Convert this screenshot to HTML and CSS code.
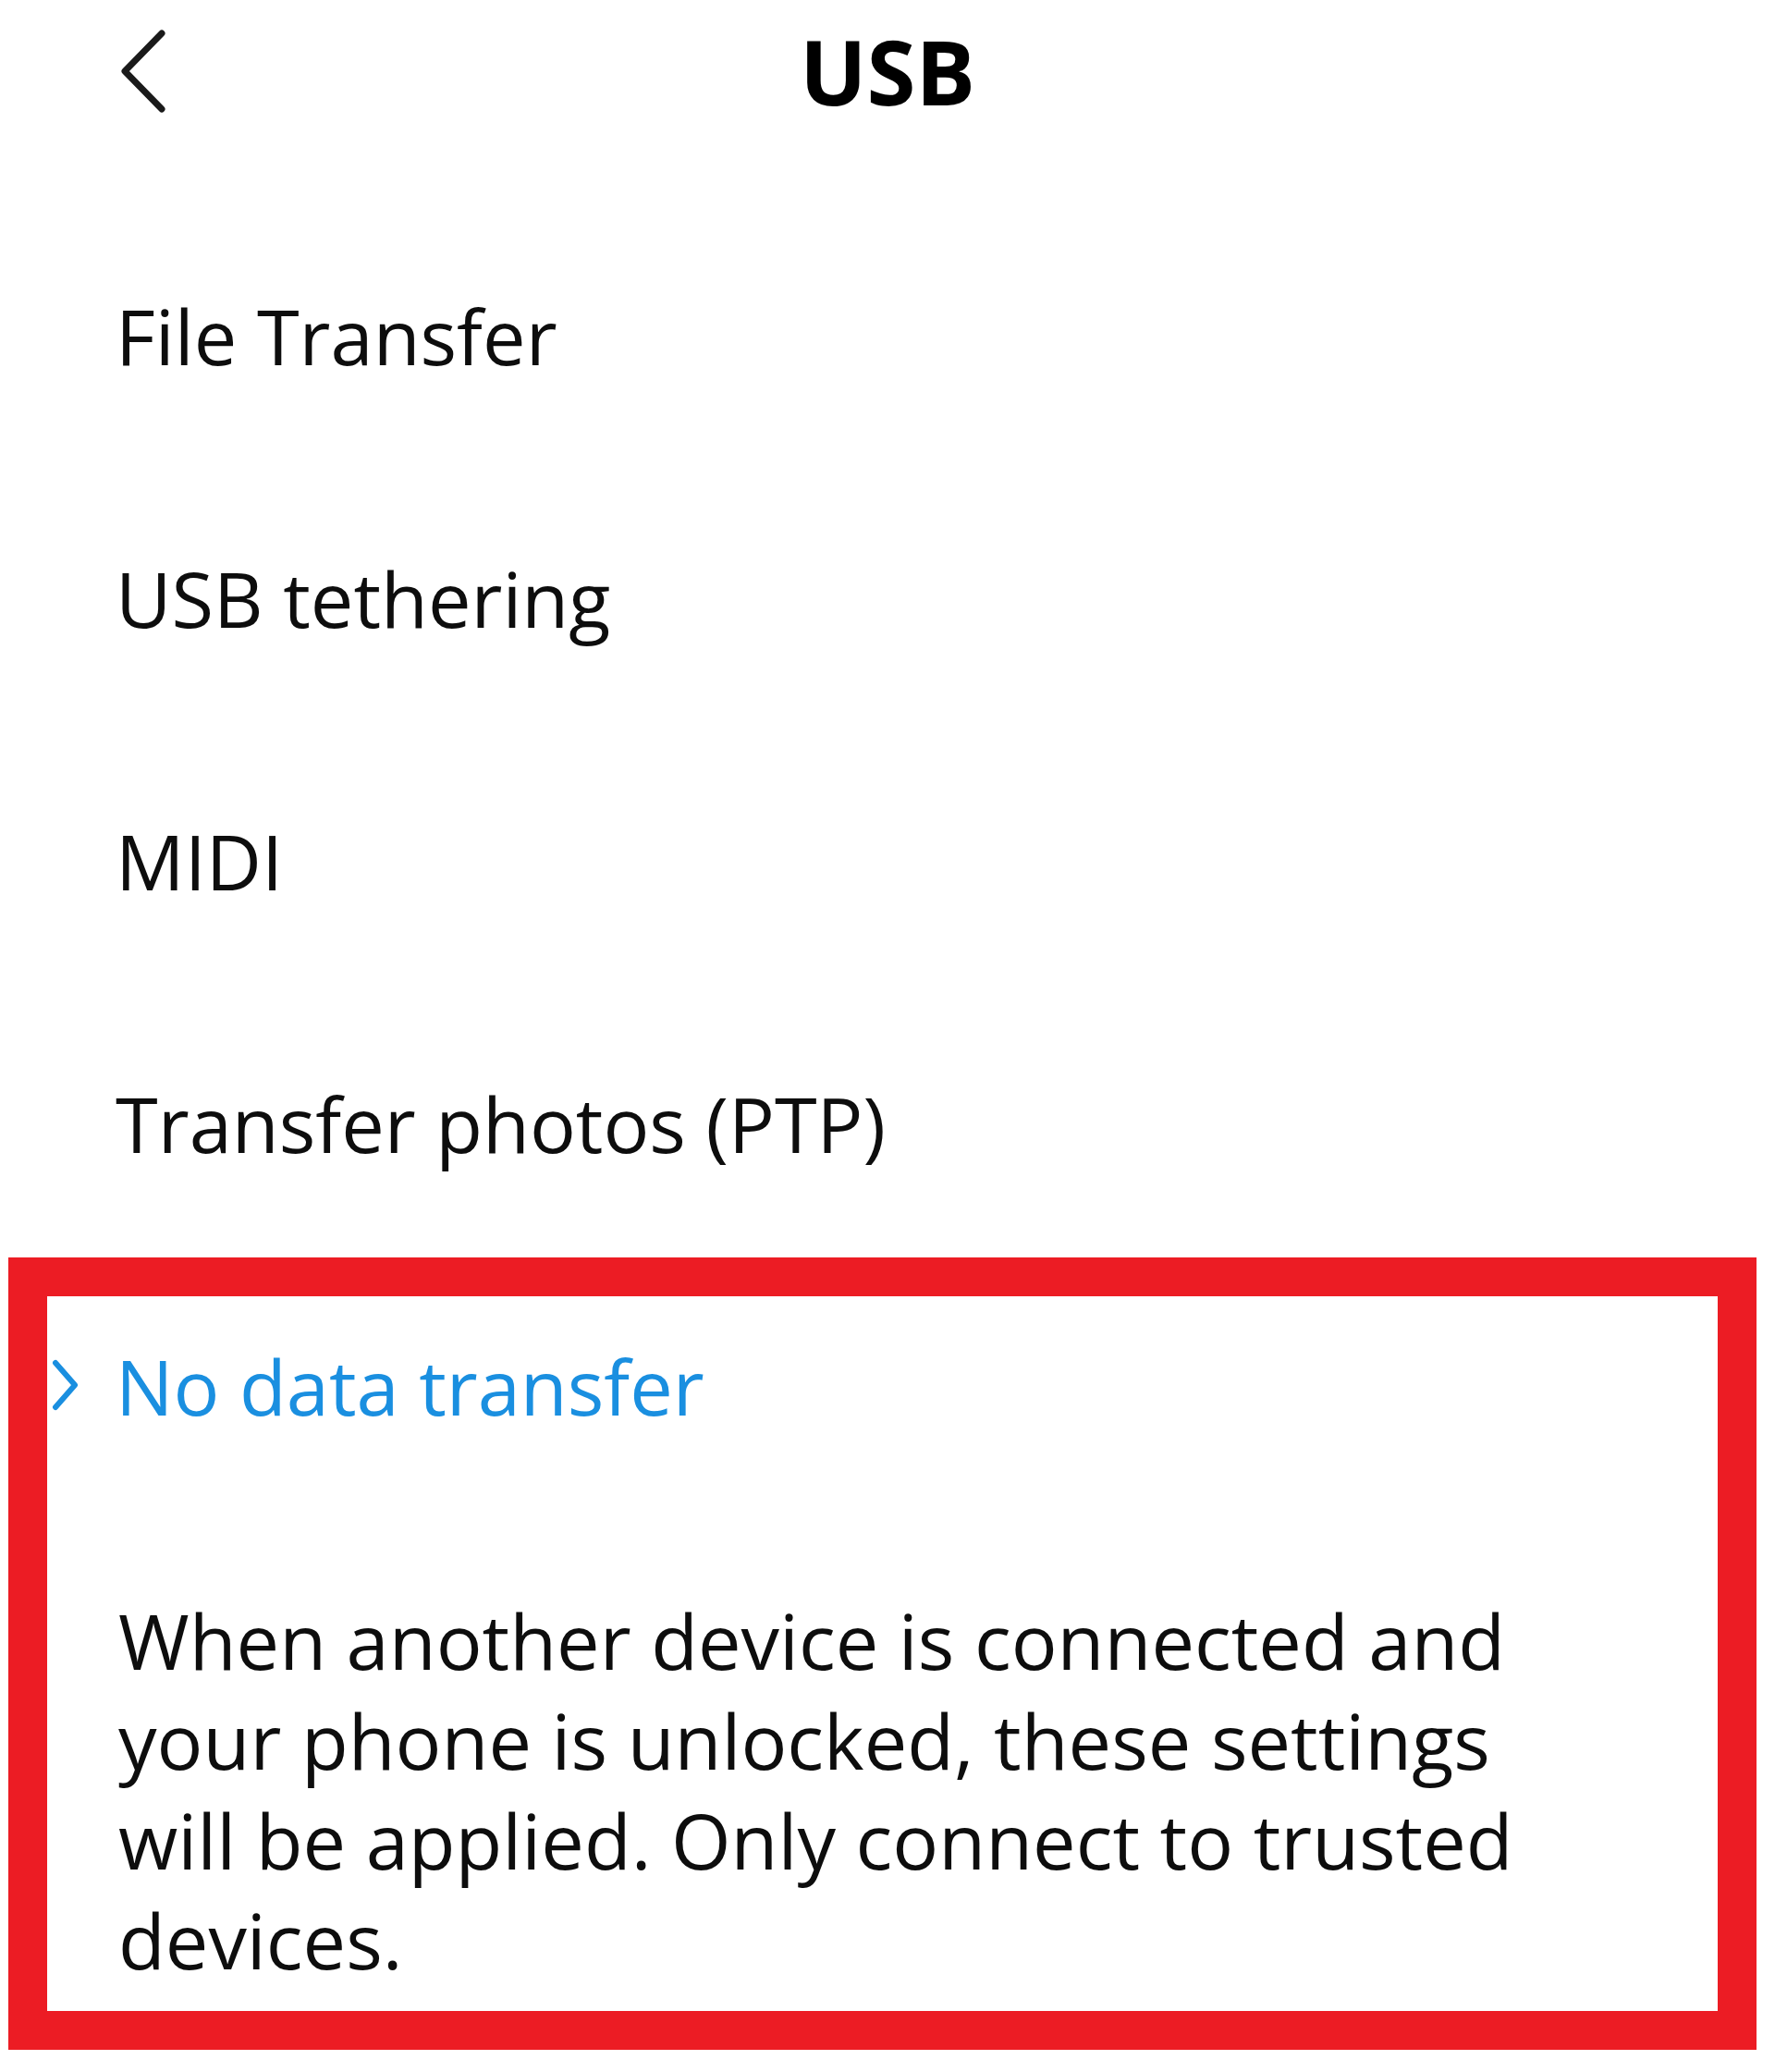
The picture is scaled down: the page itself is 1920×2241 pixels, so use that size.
FILE: index.html
```html
<!DOCTYPE html>
<html lang="en">
<head>
<meta charset="utf-8">
<title>USB</title>
<link rel="stylesheet" href="styles.css">
</head>
<body>
<div class="screen">
  <header class="topbar">
    <button class="back" aria-label="Back">
      <svg viewBox="0 0 56 92" width="56" height="92"><path d="M49 5 L9 46 L49 87" fill="none" stroke="#1a1a1a" stroke-width="7" stroke-linecap="round" stroke-linejoin="round"/></svg>
    </button>
    <h1 class="title">USB</h1>
    <span class="spacer"></span>
  </header>
  <ul class="options">
    <li class="option">File Transfer</li>
    <li class="option">USB tethering</li>
    <li class="option">MIDI</li>
    <li class="option">Transfer photos (PTP)</li>
    <li class="option selected">
      <svg class="mark" viewBox="0 0 34 56" width="34" height="56"><path d="M7 4 L28 28 L7 52" fill="none" stroke="#1a8fe0" stroke-width="6" stroke-linecap="round" stroke-linejoin="round"/></svg>
      No data transfer
    </li>
  </ul>
  <p class="note">When another device is connected and your phone is unlocked, these settings will be applied. Only connect to trusted devices.</p>
  <div class="highlight"></div>
</div>
</body>
</html>
```
FILE: styles.css
```css
html, body {
  margin: 0;
  padding: 0;
  background: #ffffff;
}
body {
  font-family: "Open Sans", "Noto Sans", sans-serif;
  color: #111111;
}
.screen {
  position: relative;
  width: 1920px;
  height: 2241px;
  overflow: hidden;
}
.topbar {
  height: 154px;
  display: grid;
  grid-template-columns: 300px 1fr 300px;
  align-items: center;
}
.back {
  border: 0;
  background: none;
  padding: 0;
  margin-left: 126px;
  width: 56px;
  height: 92px;
  display: flex;
}
.title {
  margin: 0;
  text-align: center;
  font-size: 96px;
  font-weight: 700;
  color: #000;
  line-height: 1;
}
.options {
  list-style: none;
  margin: 0;
  padding: 66px 0 0 0;
}
.option {
  position: relative;
  height: 284px;
  display: flex;
  align-items: center;
  padding-left: 125px;
  font-size: 83px;
  color: #0d0d0d;
}
.option.selected {
  color: #1a8fe0;
}
.mark {
  position: absolute;
  left: 53px;
  top: 114px;
}
.note {
  margin: 80px 0 0 0;
  padding: 0 200px 0 128px;
  font-size: 83px;
  line-height: 108px;
  color: #0d0d0d;
}
.highlight {
  position: absolute;
  left: 9px;
  top: 1360px;
  width: 1891px;
  height: 857px;
  box-sizing: border-box;
  border: 42px solid #ec1c24;
  pointer-events: none;
}
```
